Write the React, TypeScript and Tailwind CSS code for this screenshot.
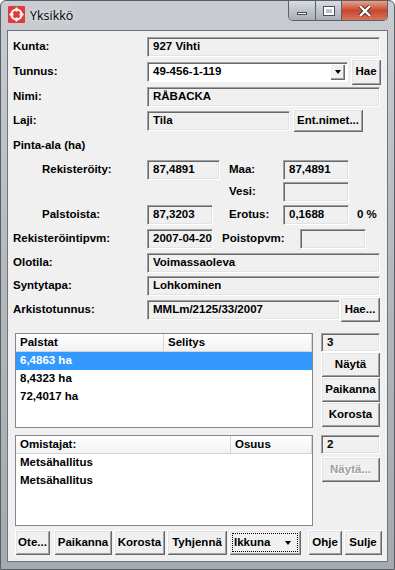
import React from "react";

const FONT = "font-['Liberation_Sans',Arial,sans-serif]";

function Field({ w, value, white, className = "" }: { w: string; value?: string; white?: boolean; className?: string }) {
  return (
    <div
      className={`${w} h-[20px] flex items-center pl-[5px] font-bold border border-t-[#a0a0a0] border-l-[#a0a0a0] border-b-white border-r-white shadow-[inset_1px_1px_0_#696969,inset_-1px_-1px_0_#e3e3e3] ${
        white ? "bg-white" : "bg-[#f0f0f0]"
      } ${className}`}
    >
      {value}
    </div>
  );
}

function Btn({ w, h = "h-[25px]", children, disabled, className = "" }: {
  w: string; h?: string; children: React.ReactNode; disabled?: boolean; className?: string;
}) {
  return (
    <div
      className={`${w} ${h} shrink-0 flex items-center justify-center font-bold bg-[#f0f0f0] shadow-[inset_1px_1px_0_#ffffff,inset_-1px_-1px_0_#696969,inset_2px_2px_0_#e3e3e3,inset_-2px_-2px_0_#a0a0a0] ${
        disabled ? "text-[#a0a0a0] [text-shadow:1px_1px_0_#fff]" : "text-black"
      } ${className}`}
    >
      {children}
    </div>
  );
}

function Label({ children, indent }: { children: React.ReactNode; indent?: boolean }) {
  return <div className={`w-[134px] shrink-0 font-bold ${indent ? "pl-[29px]" : ""}`}>{children}</div>;
}

function ListView({ h, cols, rows, selected }: {
  h: string; cols: { name: string; w: string }[]; rows: string[]; selected?: number;
}) {
  return (
    <div className={`w-[298px] ${h} bg-white border border-[#828790] flex flex-col overflow-hidden`}>
      <div className="h-[18px] flex bg-gradient-to-b from-white to-[#f1f2f4] border-b border-[#d5d5d5] shrink-0">
        {cols.map((c, i) => (
          <div key={i} className={`${c.w} h-full flex items-center pl-[4px] font-bold border-r border-[#d5d5d5]`}>
            {c.name}
          </div>
        ))}
      </div>
      {rows.map((r, i) => (
        <div
          key={i}
          className={`h-[18px] flex items-center pl-[4px] font-bold shrink-0 ${
            selected === i ? "bg-[#3399ff] text-white" : "text-black"
          }`}
        >
          {r}
        </div>
      ))}
    </div>
  );
}

function TitleIcon() {
  return (
    <svg width="17" height="17" viewBox="0 0 17 17">
      <rect x="0" y="0" width="17" height="17" rx="1" fill="#e23a3a" />
      <circle cx="8.5" cy="8.5" r="5" fill="none" stroke="#fff" strokeWidth="2.2" />
      <rect x="7.5" y="1.5" width="2" height="4" fill="#fff" />
      <rect x="7.5" y="11.5" width="2" height="4" fill="#fff" />
      <rect x="1.5" y="7.5" width="4" height="2" fill="#fff" />
      <rect x="11.5" y="7.5" width="4" height="2" fill="#fff" />
    </svg>
  );
}

export default function App() {
  return (
    <div
      className={`${FONT} w-[395px] h-[570px] text-[11.5px] text-black flex flex-col bg-gradient-to-b from-[#c9cdd2] via-[#b3b8bd] to-[#a5aaaf] rounded-t-[6px] border border-[#5a5f66] overflow-hidden`}
    >
      {/* title bar */}
      <div className="h-[29px] shrink-0 flex items-start">
        <div className="ml-[7px] mt-[5px]">
          <TitleIcon />
        </div>
        <div className="ml-[5px] mt-[6px] text-[12.5px] font-['Open_Sans','Liberation_Sans',sans-serif] text-black [text-shadow:0_0_6px_#ffffff]">
          Yksikkö
        </div>
        <div className="ml-auto mr-[6px] flex h-[20px] border border-t-0 border-[#5c6168] rounded-b-[5px] overflow-hidden">
          <div className="w-[27px] h-full flex items-center justify-center bg-gradient-to-b from-[#d8dce1] to-[#a8aeb5] border-r border-[#5c6168]">
            <div className="w-[10px] h-[3px] mt-[6px] bg-white border border-[#4a4f55]" />
          </div>
          <div className="w-[26px] h-full flex items-center justify-center bg-gradient-to-b from-[#d8dce1] to-[#a8aeb5] border-r border-[#5c6168]">
            <div className="w-[10px] h-[8px] border-2 border-white shadow-[0_0_0_1px_#4a4f55]" />
          </div>
          <div className="w-[45px] h-full flex items-center justify-center bg-gradient-to-b from-[#e8a08f] via-[#c7462c] to-[#d6735a]">
            <svg width="14" height="12" viewBox="0 0 14 12">
              <path d="M2 1 L12 11 M12 1 L2 11" stroke="#4a2a22" strokeWidth="4" />
              <path d="M2 1 L12 11 M12 1 L2 11" stroke="#fff" strokeWidth="2.4" />
            </svg>
          </div>
        </div>
      </div>

      {/* client area */}
      <div className="mx-[6px] mb-[7px] flex-1 bg-[#f0f0f0] border border-[#6f747a] flex flex-col pl-[5px] pr-[5px]">
        <div className="mt-[6px] flex items-center h-[20px]">
          <Label>Kunta:</Label>
          <Field w="w-[233px]" value="927 Vihti" />
        </div>

        <div className="mt-[2px] flex items-center h-[26px]">
          <Label>Tunnus:</Label>
          <div className="w-[201px] h-[20px] flex items-center bg-white border border-t-[#a0a0a0] border-l-[#a0a0a0] border-b-white border-r-white shadow-[inset_1px_1px_0_#696969] pl-[5px] pr-[2px] font-bold">
            <div className="flex-1">49-456-1-119</div>
            <div className="w-[15px] h-[16px] flex items-center justify-center bg-[#f0f0f0] shadow-[inset_1px_1px_0_#ffffff,inset_-1px_-1px_0_#696969,inset_-2px_-2px_0_#a0a0a0]">
              <div className="w-0 h-0 border-l-[3.5px] border-r-[3.5px] border-t-[4px] border-l-transparent border-r-transparent border-t-black" />
            </div>
          </div>
          <Btn w="w-[30px]" h="h-[26px]" className="ml-[3px]">Hae</Btn>
        </div>

        <div className="mt-[2px] flex items-center h-[20px]">
          <Label>Nimi:</Label>
          <Field w="w-[233px]" value="RÅBACKA" />
        </div>

        <div className="mt-[2px] flex items-center h-[23px]">
          <Label>Laji:</Label>
          <Field w="w-[143px]" value="Tila" />
          <Btn w="w-[70px]" h="h-[23px]" className="ml-[3px]">Ent.nimet...</Btn>
        </div>

        <div className="mt-[6px] h-[16px] flex items-center font-bold">Pinta-ala (ha)</div>

        <div className="mt-[6px] flex items-center h-[20px]">
          <Label indent>Rekisteröity:</Label>
          <Field w="w-[73px]" value="87,4891" className="shrink-0" />
          <div className="w-[63px] pl-[9px] font-bold shrink-0">Maa:</div>
          <Field w="w-[66px]" value="87,4891" />
        </div>

        <div className="mt-[2px] flex items-center h-[20px]">
          <div className="w-[216px] shrink-0" />
          <div className="w-[54px] font-bold shrink-0">Vesi:</div>
          <Field w="w-[66px]" />
        </div>

        <div className="mt-[3px] flex items-center h-[20px]">
          <Label indent>Palstoista:</Label>
          <Field w="w-[66px]" value="87,3203" className="shrink-0" />
          <div className="w-[70px] pl-[16px] font-bold shrink-0">Erotus:</div>
          <Field w="w-[66px]" value="0,1688" className="shrink-0" />
          <div className="ml-[8px] font-bold">0 %</div>
        </div>

        <div className="mt-[4px] flex items-center h-[20px]">
          <Label>Rekisteröintipvm:</Label>
          <Field w="w-[66px]" value="2007-04-20" className="shrink-0" />
          <div className="w-[87px] pl-[9px] font-bold shrink-0">Poistopvm:</div>
          <Field w="w-[66px]" />
        </div>

        <div className="mt-[4px] flex items-center h-[20px]">
          <Label>Olotila:</Label>
          <Field w="w-[233px]" value="Voimassaoleva" />
        </div>

        <div className="mt-[3px] flex items-center h-[20px]">
          <Label>Syntytapa:</Label>
          <Field w="w-[233px]" value="Lohkominen" />
        </div>

        <div className="mt-[1px] flex items-center h-[25px]">
          <Label>Arkistotunnus:</Label>
          <Field w="w-[193px]" value="MMLm/2125/33/2007" className="shrink-0" />
          <Btn w="w-[40px]" h="h-[25px]" className="ml-[0px]">Hae...</Btn>
        </div>

        <div className="mt-[11px] flex pl-[2px]">
          <ListView
            h="h-[95px]"
            cols={[{ name: "Palstat", w: "w-[148px]" }, { name: "Selitys", w: "w-[148px]" }]}
            rows={["6,4863 ha", "8,4323 ha", "72,4017 ha"]}
            selected={0}
          />
          <div className="ml-[8px] flex flex-col w-[59px]">
            <Field w="w-[59px]" value="3" className="!h-[19px]" />
            <Btn w="w-[59px]">Näytä</Btn>
            <Btn w="w-[59px]">Paikanna</Btn>
            <Btn w="w-[59px]">Korosta</Btn>
          </div>
        </div>

        <div className="mt-[7px] flex pl-[2px]">
          <ListView
            h="h-[91px]"
            cols={[{ name: "Omistajat:", w: "w-[215px]" }, { name: "Osuus", w: "w-[81px]" }]}
            rows={["Metsähallitus", "Metsähallitus"]}
          />
          <div className="ml-[8px] flex flex-col w-[59px]">
            <Field w="w-[59px]" value="2" className="!h-[19px]" />
            <Btn w="w-[59px]" disabled className="mt-[3px]">Näytä...</Btn>
          </div>
        </div>

        <div className="mt-[4px] flex items-center h-[25px] pl-[2px]">
          <Btn w="w-[35px]">Ote...</Btn>
          <Btn w="w-[58px]" className="ml-[4px]">Paikanna</Btn>
          <Btn w="w-[51px]" className="ml-[2px]">Korosta</Btn>
          <Btn w="w-[60px]" className="ml-[2px]">Tyhjennä</Btn>
          <Btn w="w-[72px]" className="ml-[2px]">
            <div className="w-[66px] h-[19px] border border-dotted border-black flex items-center justify-between pl-[1px] pr-[6px]">
              <span>Ikkuna</span>
              <span className="w-0 h-0 border-l-[3.5px] border-r-[3.5px] border-t-[4px] border-l-transparent border-r-transparent border-t-black" />
            </div>
          </Btn>
          <Btn w="w-[34px]" className="ml-[7px]">Ohje</Btn>
          <Btn w="w-[38px]" className="ml-[2px]">Sulje</Btn>
        </div>
      </div>
    </div>
  );
}
